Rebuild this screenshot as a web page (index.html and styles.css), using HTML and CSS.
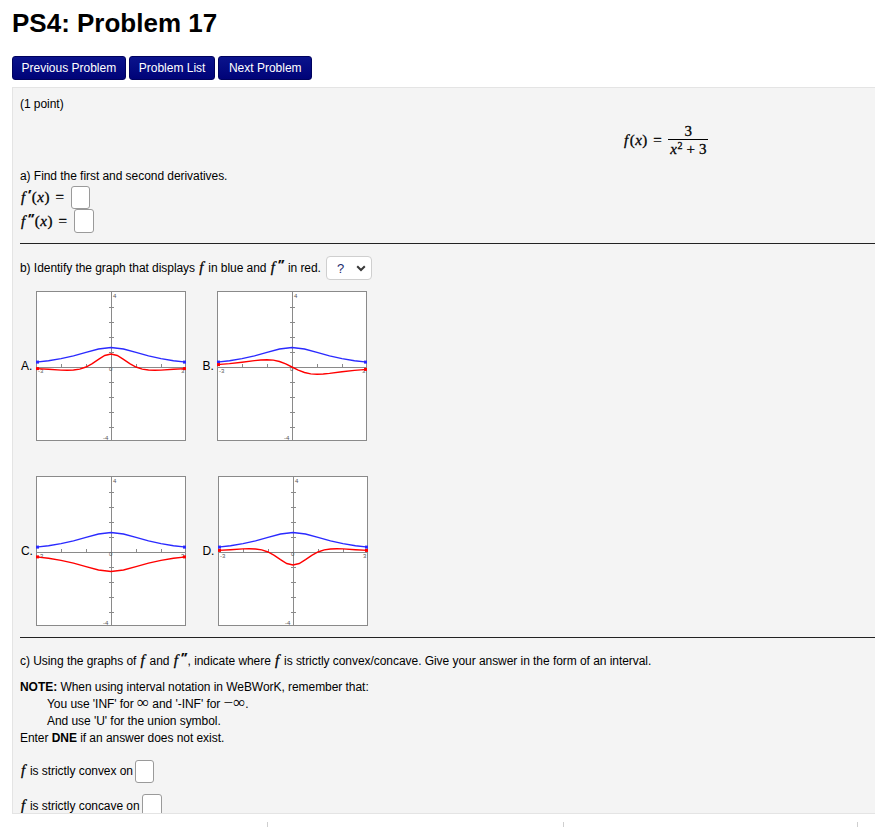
FILE: index.html
```html
<!DOCTYPE html>
<html>
<head>
<meta charset="utf-8">
<title>PS4: Problem 17</title>
<link rel="stylesheet" href="styles.css">
</head>
<body>
<div class="page">
  <h1 class="title">PS4: Problem 17</h1>
  <div class="nav">
    <span class="btn">Previous Problem</span>
    <span class="btn">Problem List</span>
    <span class="btn btn-next">Next Problem</span>
  </div>

  <div class="problem">
    <div class="line">(1 point)</div>

    <div class="eq-row">
      <span class="m"><i class="fn">f</i>(<i>x</i>)<span class="eq-sign">=</span></span>
      <span class="frac m">
        <span class="num">3</span>
        <span class="den"><i>x</i><sup>2</sup><span class="plus">+</span>3</span>
      </span>
    </div>

    <div class="line">a) Find the first and second derivatives.</div>
    <div class="ans-row"><span class="m"><i class="fn">f</i><span class="pr">'</span>(<i>x</i>)<span class="eq-sign">=</span></span><span class="ans"></span></div>
    <div class="ans-row"><span class="m"><i class="fn">f</i><span class="pr pr2">''</span>(<i>x</i>)<span class="eq-sign">=</span></span><span class="ans ans-b"></span></div>

    <div class="rule rule-a"></div>

    <div class="b-row">
      <span>b) Identify the graph that displays <span class="m"><i class="fn">f</i></span> in blue and <span class="m"><i class="fn">f</i><span class="pr pr2">''</span></span> in red.</span>
      <span class="select"><span class="q">?</span><svg width="10" height="7" viewBox="0 0 10 7"><path d="M1.2 1.2L5 5l3.8-3.8" stroke="#3a3a3a" stroke-width="2" fill="none"/></svg></span>
    </div>

    <div class="graphs">
      <div class="cell">
        <span class="lbl">A.</span>
        <svg class="graph" width="150" height="150" viewBox="0 0 150 150">
          <rect x="0.5" y="0.5" width="149" height="149" fill="#fff" stroke="#8a8a8a"/>
          <path d="M0 76.5H150M75.5 0V150" stroke="#8a8a8a" fill="none"/>
          <path d="M73 16.5h5M73 31.5h5M73 46.5h5M73 61.5h5M73 91.5h5M73 106.5h5M73 121.5h5M73 136.5h5M25.5 73v4M50.5 73v4M100.5 73v4M125.5 73v4" stroke="#8a8a8a" fill="none"/>
          <text x="77" y="7" class="tl">4</text><text x="67" y="149" class="tl">-4</text><text x="2" y="82" class="tl">-3</text><text x="145" y="82" class="tl">3</text><text x="73" y="80" class="tl">0</text>
          <polyline class="blue" points="0,71.1 12.5,69.7 25,67.6 37.5,64.9 50,61.4 62.5,58 75,56.5 87.5,58 100,61.4 112.5,64.9 125,67.6 137.5,69.7 150,71.1"/>
          <polyline class="red" points="0,77.6 12.5,78.3 25,79.1 31.25,79.25 37.5,79 43.75,78.1 50,76 56.25,72.6 62.5,68.3 68.75,64.5 75,63 81.25,64.5 87.5,68.3 93.75,72.6 100,76 106.25,78.1 112.5,79 118.75,79.25 125,79.1 137.5,78.3 150,77.6"/>
          <rect x="0" y="69.6" width="3" height="3" fill="#2a2aff"/><rect x="147" y="69.6" width="3" height="3" fill="#2a2aff"/>
          <rect x="0" y="76.1" width="3" height="3" fill="#f00"/><rect x="147" y="76.1" width="3" height="3" fill="#f00"/>
        </svg>
      </div>
      <div class="cell">
        <span class="lbl">B.</span>
        <svg class="graph" width="150" height="150" viewBox="0 0 150 150">
          <rect x="0.5" y="0.5" width="149" height="149" fill="#fff" stroke="#8a8a8a"/>
          <path d="M0 76.5H150M75.5 0V150" stroke="#8a8a8a" fill="none"/>
          <path d="M73 16.5h5M73 31.5h5M73 46.5h5M73 61.5h5M73 91.5h5M73 106.5h5M73 121.5h5M73 136.5h5M25.5 73v4M50.5 73v4M100.5 73v4M125.5 73v4" stroke="#8a8a8a" fill="none"/>
          <text x="77" y="7" class="tl">4</text><text x="67" y="149" class="tl">-4</text><text x="2" y="82" class="tl">-3</text><text x="145" y="82" class="tl">3</text><text x="73" y="80" class="tl">0</text>
          <polyline class="blue" points="0,71.1 12.5,69.7 25,67.6 37.5,64.9 50,61.4 62.5,58 75,56.5 87.5,58 100,61.4 112.5,64.9 125,67.6 137.5,69.7 150,71.1"/>
          <polyline class="red" points="0,73.6 12.5,72.6 25,71.2 37.5,69.6 43.75,69 50,68.7 56.25,69.1 62.5,70.5 68.75,72.9 75,76 81.25,79.1 87.5,81.5 93.75,82.9 100,83.3 106.25,83 112.5,82.4 125,80.8 137.5,79.4 150,78.4"/>
          <rect x="0" y="69.6" width="3" height="3" fill="#2a2aff"/><rect x="147" y="69.6" width="3" height="3" fill="#2a2aff"/>
          <rect x="0" y="72.1" width="3" height="3" fill="#f00"/><rect x="147" y="76.9" width="3" height="3" fill="#f00"/>
        </svg>
      </div>
      <div class="cell">
        <span class="lbl">C.</span>
        <svg class="graph" width="150" height="150" viewBox="0 0 150 150">
          <rect x="0.5" y="0.5" width="149" height="149" fill="#fff" stroke="#8a8a8a"/>
          <path d="M0 76.5H150M75.5 0V150" stroke="#8a8a8a" fill="none"/>
          <path d="M73 16.5h5M73 31.5h5M73 46.5h5M73 61.5h5M73 91.5h5M73 106.5h5M73 121.5h5M73 136.5h5M25.5 73v4M50.5 73v4M100.5 73v4M125.5 73v4" stroke="#8a8a8a" fill="none"/>
          <text x="77" y="7" class="tl">4</text><text x="67" y="149" class="tl">-4</text><text x="2" y="82" class="tl">-3</text><text x="145" y="82" class="tl">3</text><text x="73" y="80" class="tl">0</text>
          <polyline class="blue" points="0,71.1 12.5,69.7 25,67.6 37.5,64.9 50,61.4 62.5,58 75,56.5 87.5,58 100,61.4 112.5,64.9 125,67.6 137.5,69.7 150,71.1"/>
          <polyline class="red" points="0,80.9 12.5,82.3 25,84.4 37.5,87.1 50,90.6 62.5,94 75,95.5 87.5,94 100,90.6 112.5,87.1 125,84.4 137.5,82.3 150,80.9"/>
          <rect x="0" y="69.6" width="3" height="3" fill="#2a2aff"/><rect x="147" y="69.6" width="3" height="3" fill="#2a2aff"/>
          <rect x="0" y="79.4" width="3" height="3" fill="#f00"/><rect x="147" y="79.4" width="3" height="3" fill="#f00"/>
        </svg>
      </div>
      <div class="cell">
        <span class="lbl">D.</span>
        <svg class="graph" width="150" height="150" viewBox="0 0 150 150">
          <rect x="0.5" y="0.5" width="149" height="149" fill="#fff" stroke="#8a8a8a"/>
          <path d="M0 76.5H150M75.5 0V150" stroke="#8a8a8a" fill="none"/>
          <path d="M73 16.5h5M73 31.5h5M73 46.5h5M73 61.5h5M73 91.5h5M73 106.5h5M73 121.5h5M73 136.5h5M25.5 73v4M50.5 73v4M100.5 73v4M125.5 73v4" stroke="#8a8a8a" fill="none"/>
          <text x="77" y="7" class="tl">4</text><text x="67" y="149" class="tl">-4</text><text x="2" y="82" class="tl">-3</text><text x="145" y="82" class="tl">3</text><text x="73" y="80" class="tl">0</text>
          <polyline class="blue" points="0,71.1 12.5,69.7 25,67.6 37.5,64.9 50,61.4 62.5,58 75,56.5 87.5,58 100,61.4 112.5,64.9 125,67.6 137.5,69.7 150,71.1"/>
          <polyline class="red" points="0,74.4 12.5,73.7 25,72.9 31.25,72.75 37.5,73 43.75,73.9 50,76 56.25,79.4 62.5,83.7 68.75,87.5 75,89 81.25,87.5 87.5,83.7 93.75,79.4 100,76 106.25,73.9 112.5,73 118.75,72.75 125,72.9 137.5,73.7 150,74.4"/>
          <rect x="0" y="69.6" width="3" height="3" fill="#2a2aff"/><rect x="147" y="69.6" width="3" height="3" fill="#2a2aff"/>
          <rect x="0" y="72.9" width="3" height="3" fill="#f00"/><rect x="147" y="72.9" width="3" height="3" fill="#f00"/>
        </svg>
      </div>
    </div>

    <div class="rule rule-b"></div>

    <div class="line c-line">c) Using the graphs of <span class="m"><i class="fn">f</i></span> and <span class="m"><i class="fn">f</i><span class="pr pr2">''</span></span>, indicate where <span class="m"><i class="fn">f</i></span> is strictly convex/concave. Give your answer in the form of an interval.</div>

    <div class="note">
      <div class="line"><b>NOTE:</b> When using interval notation in WeBWorK, remember that:</div>
      <div class="line indent">You use 'INF' for <span class="inf">∞</span> and '-INF' for <span class="inf">−∞</span>.</div>
      <div class="line indent">And use 'U' for the union symbol.</div>
      <div class="line">Enter <b>DNE</b> if an answer does not exist.</div>
    </div>

    <div class="ans-row conv"><span><span class="m"><i class="fn">f</i></span> is strictly convex on</span><span class="ans"></span></div>
    <div class="ans-row conc"><span><span class="m"><i class="fn">f</i></span> is strictly concave on</span><span class="ans ans-b"></span></div>
  </div>

  <div class="ticks"><span class="tick t1"></span><span class="tick t2"></span><span class="tick t3"></span></div>
</div>
</body>
</html>
```

FILE: styles.css
```css
html, body {
  margin: 0;
  padding: 0;
  background: #fff;
  overflow: hidden;
}
body {
  font-family: Arial, "Liberation Sans", sans-serif;
  font-size: 12px;
  color: #000;
}
.page {
  padding: 8px 0 0 12px;
}
.title {
  margin: 0;
  font-size: 26px;
  line-height: 30px;
  font-weight: bold;
  color: #000;
}
.nav {
  display: flex;
  gap: 3.5px;
  margin-top: 18px;
}
.btn {
  display: inline-flex;
  align-items: center;
  box-sizing: border-box;
  height: 24px;
  padding: 0 8.5px;
  background: linear-gradient(#0a138c, #000378);
  border: 1px solid #00025e;
  border-radius: 3px;
  color: #fff;
  font-size: 12px;
}
.btn-next {
  padding: 0 9.5px;
}
.problem {
  margin-top: 7px;
  margin-right: -40px;
  height: 727px;
  box-sizing: border-box;
  overflow: hidden;
  background: #f4f4f4;
  border: 1px solid #e4e4e4;
  padding: 8px 0 0 7px;
  line-height: 17px;
  letter-spacing: -0.05px;
}
.line {
  line-height: 17px;
}
.m {
  font-family: "Liberation Serif", "Times New Roman", serif;
  font-size: 15px;
  letter-spacing: 0;
  -webkit-text-stroke: 0.3px #000;
}
.m i {
  font-style: italic;
  margin: 0 0.5px;
}
.m i.fn {
  margin: 0 1.5px 0 1px;
}
.pr {
  display: inline-block;
  font-family: "Liberation Sans", Arial, sans-serif;
  font-size: 13px;
  font-weight: bold;
  line-height: 10px;
  transform: skewX(-18deg);
  vertical-align: 3px;
  margin: 0 1.5px 0 0.5px;
}
.pr2 {
  letter-spacing: 0;
}
.eq-sign {
  margin: 0 5px 0 6px;
  color: #222;
}
.eq-row {
  display: flex;
  align-items: center;
  height: 55px;
  padding-left: 603px;
}
.frac {
  display: inline-flex;
  flex-direction: column;
  align-items: center;
  margin-left: 1px;
}
.num {
  line-height: 14px;
  padding: 0 2px 1px;
  border-bottom: 1px solid #000;
  align-self: stretch;
  text-align: center;
}
.den {
  line-height: 15px;
  padding: 2px 2px 0;
}
.den sup {
  font-size: 10px;
  line-height: 0;
  vertical-align: 5px;
}
.plus {
  margin: 0 4px;
}
.ans-row {
  display: flex;
  align-items: center;
  height: 24px;
}
.ans {
  display: inline-block;
  box-sizing: border-box;
  width: 19px;
  height: 23px;
  margin-left: 2px;
  background: #fff;
  border: 1px solid #9a9a9a;
  border-radius: 3px;
}
.ans-b {
  width: 20px;
  height: 24px;
}
.rule {
  border-top: 1px solid #222;
}
.rule-a {
  margin-top: 10px;
}
.b-row {
  display: flex;
  align-items: center;
  height: 24px;
  margin-top: 12px;
  gap: 5px;
}
.select {
  display: inline-flex;
  align-items: center;
  box-sizing: border-box;
  width: 46px;
  height: 24px;
  padding-left: 10px;
  gap: 12px;
  background: #fff;
  border: 1px solid #cfcfcf;
  border-radius: 4px;
  font-size: 13px;
}
.q {
  color: #1c2a6c;
}
.graphs {
  display: grid;
  grid-template-columns: 181.5px 181.5px;
  row-gap: 35px;
  margin-top: 11px;
}
.cell {
  display: flex;
  align-items: center;
  gap: 3.5px;
  height: 150px;
}
.lbl {
  font-size: 12px;
  padding-left: 1px;
}
.graph {
  display: block;
}
.graph .tl {
  font-family: "Liberation Sans", Arial, sans-serif;
  font-size: 6px;
  fill: #555;
}
.graph .blue {
  fill: none;
  stroke: #2a2aff;
  stroke-width: 1.4;
}
.graph .red {
  fill: none;
  stroke: #ff0000;
  stroke-width: 1.4;
}
.rule-b {
  margin-top: 11px;
}
.c-line {
  margin-top: 14px;
}
.note {
  margin-top: 9px;
}
.indent {
  padding-left: 27px;
}
.inf {
  font-family: "Liberation Serif", "Times New Roman", serif;
  font-size: 17px;
  line-height: 0;
  letter-spacing: 0;
}
.conv {
  margin-top: 12px;
}
.conc {
  margin-top: 11px;
}
.ticks {
  position: relative;
  height: 5px;
  margin-top: 8px;
}
.tick {
  position: absolute;
  top: 0;
  width: 1px;
  height: 5px;
  background: #cfcfcf;
}
.t1 { left: 255px; }
.t2 { left: 551px; }
.t3 { left: 845px; }
```
